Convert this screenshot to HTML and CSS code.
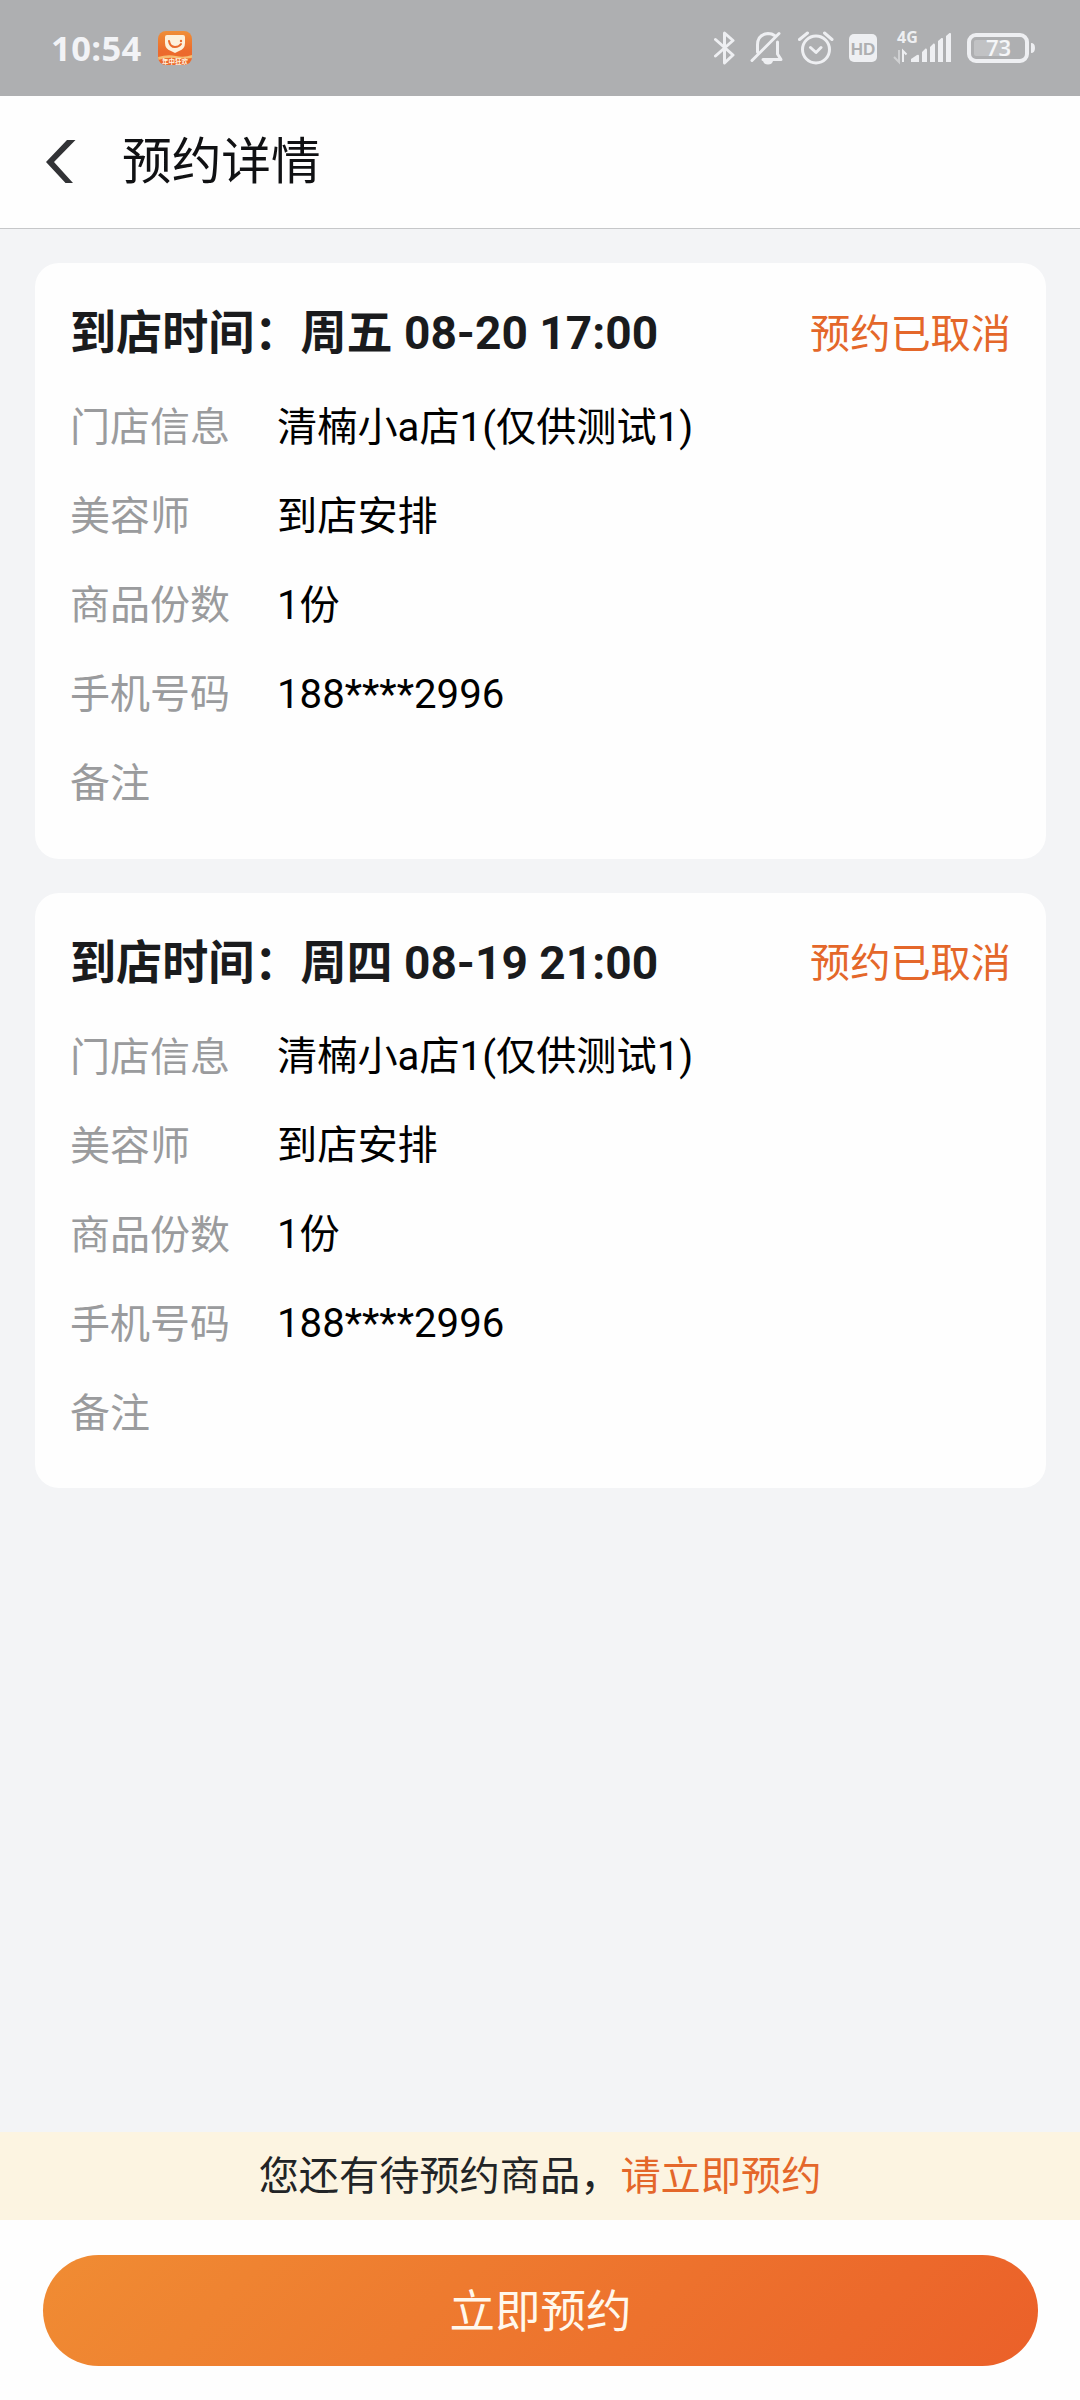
FILE: index.html
```html
<!DOCTYPE html>
<html lang="zh-CN">
<head>
<meta charset="utf-8">
<title>预约详情</title>
<link rel="stylesheet" href="styles.css">
</head>
<body>
<div class="status-bar">
  <span class="clock">10:54</span>
  <svg class="app-icon" width="34" height="34" viewBox="0 0 34 34">
    <defs>
      <linearGradient id="app-bg" x1="0" y1="0" x2="0" y2="1"><stop offset="0" stop-color="#ef8f38"/><stop offset=".6" stop-color="#ec6a2c"/></linearGradient>
      <clipPath id="app-clip"><rect width="34" height="34" rx="8"/></clipPath>
    </defs>
    <g clip-path="url(#app-clip)">
      <rect width="34" height="34" fill="url(#app-bg)"/>
      <path d="M0 26Q10 23 18 25T34 24V27Q24 28 17 27T0 29Z" fill="#f6bd72"/>
      <path d="M7 6Q7 4 9 4H25Q27 4 27 6V12Q27 18 21 20L17 22L13 20Q7 18 7 12Z" fill="#fdf1dc"/>
      <path d="M11 10Q12 16 17 16Q21 16 23 13" fill="none" stroke="#ea6a2c" stroke-width="2" stroke-linecap="round"/>
      <circle cx="23" cy="10" r="1.2" fill="#ea6a2c"/>
      <text x="17" y="32.5" class="app-label">年中狂欢</text>
    </g>
  </svg>
  <div class="tray">
    <svg width="22" height="36" viewBox="0 0 22 36" class="line"><path d="M1.5 9.5L19 25L10.5 33V3L19 10.5L1.5 26"/></svg>
    <svg class="bell" width="34" height="36" viewBox="0 0 34 36">
      <path class="line" d="M2 30.5L29 3.500M7.500 22V15Q7.500 4.500 18 3.500Q22 3.500 24.500 5.500M13 29.500H31L27.500 24V12"/>
      <path class="solid" d="M13 31H23Q22 34.500 18 34.500T13 31Z"/>
    </svg>
    <svg class="alarm" width="36" height="36" viewBox="0 0 36 36"><g class="line"><circle cx="18" cy="19.500" r="13.500"/><path d="M12.500 17.500L18 22.500L23 17.500M1.500 9.500L9.500 3M26.500 3L34 9.500"/></g></svg>
    <svg class="hd" width="28" height="36" viewBox="0 0 28 36"><rect class="solid" y="4" width="28" height="28" rx="5"/><text x="14" y="24.500" class="hd-label">HD</text></svg>
    <svg class="signal" width="58" height="36" viewBox="0 0 58 36">
      <text x="3" y="13" class="net-label">4G</text>
      <path class="dim" d="M0 27L5 32V20"/>
      <path class="up" d="M9 32V21L12.500 24.500"/>
      <path class="solid" d="M17 32V29L23 25Q25 24 25 26V32ZM28 32V22L31.500 18.500Q33 18 33 20V32ZM36 32V17L39.500 13.500Q41 13 41 15V32ZM44 32V11L47.500 8Q49 7.500 49 9V32ZM52 32V6L55.500 3Q57 2.500 57 4V32Z"/>
    </svg>
    <svg class="battery" width="68" height="36" viewBox="0 0 68 36">
      <rect class="charge" x="7" y="10" width="36" height="16" rx="2"/>
      <rect class="shell" x="2" y="5" width="58" height="26" rx="7"/>
      <path class="solid" d="M64 13Q68 13 68 18T64 23Z"/>
      <text x="31.500" y="26" class="level">73</text>
    </svg>
  </div>
</div>
<header class="nav">
  <svg class="back" width="32" height="44" viewBox="0 0 32 44"><path d="M22 0H30.500L9 22L28 43H20.500L1 22Z"/></svg>
  <h1>预约详情</h1>
</header>
<main class="list">
  <section class="card">
    <div class="card-head"><h2>到店时间：周五 08-20 17:00</h2><span class="state">预约已取消</span></div>
    <dl>
      <dt>门店信息</dt><dd>清楠小a店1(仅供测试1)</dd>
      <dt>美容师</dt><dd>到店安排</dd>
      <dt>商品份数</dt><dd>1份</dd>
      <dt>手机号码</dt><dd>188****2996</dd>
      <dt>备注</dt><dd></dd>
    </dl>
  </section>
  <section class="card">
    <div class="card-head"><h2>到店时间：周四 08-19 21:00</h2><span class="state">预约已取消</span></div>
    <dl>
      <dt>门店信息</dt><dd>清楠小a店1(仅供测试1)</dd>
      <dt>美容师</dt><dd>到店安排</dd>
      <dt>商品份数</dt><dd>1份</dd>
      <dt>手机号码</dt><dd>188****2996</dd>
      <dt>备注</dt><dd></dd>
    </dl>
  </section>
</main>
<p class="notice">您还有待预约商品，<a>请立即预约</a></p>
<footer class="action"><button type="button">立即预约</button></footer>
</body>
</html>
```
FILE: styles.css
```css
* { box-sizing: border-box; margin: 0; padding: 0; }
body {
  display: flex; flex-direction: column; height: 2400px;
  background: #f3f4f6; color: #000;
  font: 40.200px/1.2 Roboto, "Noto Sans CJK SC", sans-serif;
}
.status-bar { display: flex; align-items: center; flex: none; height: 96px; padding: 0 45px 0 51px; background: #aeafb1; color: #f2f3f6; }
.clock { font: 700 34.500px/96px "Open Sans", sans-serif; width: 107px; letter-spacing: .4px; }
.app-label { font: 700 6.500px "Noto Sans CJK SC", sans-serif; fill: #fff3e0; text-anchor: middle; }
.tray { display: flex; align-items: center; margin-left: auto; }
.line { fill: none; stroke: #eeeff2; stroke-width: 3; stroke-linecap: round; stroke-linejoin: round; }
.solid { fill: #eeeff2; }
.bell { margin-left: 14px; }
.alarm { margin-left: 14px; }
.hd { margin-left: 15px; }
.hd-label { font: 700 17px "Liberation Sans", sans-serif; fill: #aeafb1; text-anchor: middle; }
.signal { margin-left: 17px; overflow: visible; }
.net-label { font: 700 16px "Open Sans", sans-serif; fill: #eeeff2; }
.dim { fill: none; stroke: #cfd0d2; stroke-width: 2; }
.up { fill: none; stroke: #eeeff2; stroke-width: 2; }
.battery { margin-left: 15px; }
.charge { fill: #c1c2c4; }
.shell { fill: none; stroke: #eeeff2; stroke-width: 4; }
.level { font: 600 22px "Open Sans", sans-serif; fill: #f5f6f8; text-anchor: middle; }
.nav { display: flex; align-items: center; flex: none; height: 133px; padding: 0 45px; background: #fefefe; border-bottom: 1px solid #c6c7c9; }
.back { fill: #323336; }
.nav h1 { margin-left: 45px; font-size: 49.700px; font-weight: 400; line-height: 60px; color: #101113; }
.list { display: flex; flex-direction: column; gap: 34px; flex: 1; padding: 34px 34px 0 35px; }
.card { height: 595.500px; padding: 36px 35px 0; background: #fefefe; border-radius: 24px; }
.card-head { display: flex; align-items: center; justify-content: space-between; height: 70px; }
h2 { font-size: 46.080px; font-weight: 700; color: #1a1b1d; white-space: nowrap; }
.state { padding-top: 2px; color: #e4672a; }
dl { display: grid; grid-template-columns: 207px 1fr; grid-auto-rows: 89px; align-items: center; margin-top: 14.600px; }
dt { font-size: 40px; color: #9a9b9d; }
.notice { flex: none; height: 88px; line-height: 90px; text-align: center; background: #fcf4e1; color: #222426; }
.notice a { color: #e4672a; }
.action { flex: none; height: 180px; padding: 35px 42px 0 43px; background: #fefefe; }
.action button { display: block; width: 100%; height: 111px; padding-top: 5px; border: 0; border-radius: 56px; background: linear-gradient(135deg, #f08c33, #eb6029); color: #fff8ec; font: 400 45.500px/106px Roboto, "Noto Sans CJK SC", sans-serif; }
```
